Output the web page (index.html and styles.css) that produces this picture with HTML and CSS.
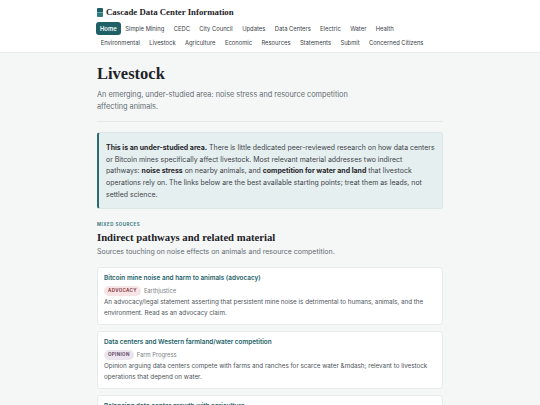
FILE: index.html
```html
<!DOCTYPE html>
<html lang="en">
<head>
<meta charset="utf-8">
<title>Livestock — Cascade Data Center Information</title>
<link rel="stylesheet" href="styles.css">
</head>
<body>
<header class="site-header">
  <div class="wrap">
    <div class="brand">
      <span class="logo"></span>
      <span class="brand-name">Cascade Data Center Information</span>
    </div>
    <nav class="nav">
      <a class="nav-link active" href="#">Home</a>
      <a class="nav-link" href="#">Simple Mining</a>
      <a class="nav-link" href="#">CEDC</a>
      <a class="nav-link" href="#">City Council</a>
      <a class="nav-link" href="#">Updates</a>
      <a class="nav-link" href="#">Data Centers</a>
      <a class="nav-link" href="#">Electric</a>
      <a class="nav-link" href="#">Water</a>
      <a class="nav-link" href="#">Health</a>
      <a class="nav-link" href="#">Environmental</a>
      <a class="nav-link" href="#">Livestock</a>
      <a class="nav-link" href="#">Agriculture</a>
      <a class="nav-link" href="#">Economic</a>
      <a class="nav-link" href="#">Resources</a>
      <a class="nav-link" href="#">Statements</a>
      <a class="nav-link" href="#">Submit</a>
      <a class="nav-link" href="#">Concerned Citizens</a>
    </nav>
  </div>
</header>
<main class="wrap main">
  <section class="page-head">
    <h1>Livestock</h1>
    <p class="lede">An emerging, under-studied area: noise stress and resource competition affecting animals.</p>
  </section>
  <div class="callout">
    <p><strong>This is an under-studied area.</strong> There is little dedicated peer-reviewed research on how data centers or Bitcoin mines specifically affect livestock. Most relevant material addresses two indirect pathways: <strong>noise stress</strong> on nearby animals, and <strong>competition for water and land</strong> that livestock operations rely on. The links below are the best available starting points; treat them as leads, not settled science.</p>
  </div>
  <section class="group">
    <div class="eyebrow">Mixed sources</div>
    <h2>Indirect pathways and related material</h2>
    <p class="group-desc">Sources touching on noise effects on animals and resource competition.</p>
    <div class="cards">
      <article class="card">
        <a class="card-title" href="#">Bitcoin mine noise and harm to animals (advocacy)</a>
        <div class="meta"><span class="badge badge-advocacy">Advocacy</span><span class="source">Earthjustice</span></div>
        <p class="card-desc">An advocacy/legal statement asserting that persistent mine noise is detrimental to humans, animals, and the environment. Read as an advocacy claim.</p>
      </article>
      <article class="card">
        <a class="card-title" href="#">Data centers and Western farmland/water competition</a>
        <div class="meta"><span class="badge badge-opinion">Opinion</span><span class="source">Farm Progress</span></div>
        <p class="card-desc">Opinion arguing data centers compete with farms and ranches for scarce water &amp;mdash; relevant to livestock operations that depend on water.</p>
      </article>
      <article class="card">
        <a class="card-title" href="#">Balancing data center growth with agriculture</a>
        <div class="meta"><span class="badge badge-opinion">Opinion</span><span class="source">Farm Progress</span></div>
        <p class="card-desc">Discussion of how data center growth interacts with agricultural land use.</p>
      </article>
    </div>
  </section>
</main>
</body>
</html>
```

FILE: styles.css
```css
* { box-sizing: border-box; }
html, body { margin: 0; padding: 0; }
body {
  background: #f5f7f7;
  color: #2b3136;
  font-family: Inter, "Liberation Sans", Arial, sans-serif;
}
.wrap {
  width: 346px;
  margin: 0 auto;
}
.site-header {
  background: #ffffff;
  border-bottom: 1px solid #e6eaea;
  padding: 5px 0 3px;
}
.brand {
  display: flex;
  align-items: center;
  gap: 3px;
  height: 14px;
}
.logo {
  width: 6px;
  height: 9px;
  border-radius: 1px;
  background: linear-gradient(#1f5f66 0 45%, #6aa6aa 45% 60%, #2d7a80 60%);
}
.brand-name {
  font-family: "Liberation Serif", "Times New Roman", serif;
  font-weight: bold;
  font-size: 8.8px;
  color: #1d2227;
}
.nav {
  display: flex;
  flex-wrap: wrap;
  row-gap: 1px;
  margin-top: 3px;
  margin-left: -1px;
}
.nav-link {
  font-size: 5.85px;
  color: #3b4247;
  text-decoration: none;
  padding: 3px 4.7px;
  line-height: 7px;
  border-radius: 3px;
}
.nav-link.active {
  background: #1f5f66;
  color: #fff;
  font-weight: 600;
  padding: 3px 4px;
}
.main { padding-top: 11px; }
.page-head {
  border-bottom: 1px solid #e4e8e8;
  padding-bottom: 8px;
}
h1 {
  font-family: "Liberation Serif", "Times New Roman", serif;
  font-size: 16.5px;
  margin: 0;
  line-height: 20px;
  color: #1d2227;
}
.lede {
  margin: 5px 0 0;
  font-size: 7.33px;
  line-height: 12px;
  color: #636b70;
  max-width: 272px;
}
.callout {
  margin-top: 10px;
  background: #e6eff0;
  border: 1px solid #dde7e8;
  border-left: 2px solid #2d6a70;
  border-radius: 3px;
  padding: 9px 5px 7px 7px;
}
.callout p {
  margin: 0;
  font-size: 6.95px;
  line-height: 11.7px;
  color: #3c4348;
}
.callout strong { color: #1e2428; font-weight: 700; }
.group { margin-top: 13px; }
.eyebrow {
  font-size: 4.4px;
  font-weight: 700;
  letter-spacing: 0.5px;
  text-transform: uppercase;
  color: #3a7a80;
  line-height: 6px;
}
h2 {
  font-family: "Liberation Serif", "Times New Roman", serif;
  font-size: 10.7px;
  margin: 2px 0 0;
  line-height: 14px;
  color: #1d2227;
}
.group-desc {
  margin: 3px 0 0;
  font-size: 6.98px;
  line-height: 10px;
  color: #636b70;
}
.cards {
  margin-top: 10px;
  display: flex;
  flex-direction: column;
  gap: 6px;
}
.card {
  background: #fff;
  border: 1px solid #e6eaea;
  border-radius: 3px;
  padding: 5.5px 6px 4px;
}
.card-title {
  display: block;
  font-size: 6.4px;
  font-weight: 600;
  line-height: 11px;
  color: #245f68;
  text-decoration: none;
}
.meta {
  display: flex;
  align-items: center;
  gap: 3px;
  margin-top: 1.5px;
  height: 10px;
}
.badge {
  font-size: 4.5px;
  font-weight: 700;
  text-transform: uppercase;
  letter-spacing: 0.35px;
  padding: 0 4px;
  border-radius: 5px;
  line-height: 10px;
  height: 10px;
}
.badge-advocacy { background: #f7e4e6; color: #8a3b45; }
.badge-opinion { background: #ece5ef; color: #5f4a69; }
.source {
  font-size: 5.8px;
  color: #7a8185;
}
.card-desc {
  margin: 1px 0 0;
  font-size: 6.28px;
  line-height: 11.5px;
  color: #4d5459;
}
```
